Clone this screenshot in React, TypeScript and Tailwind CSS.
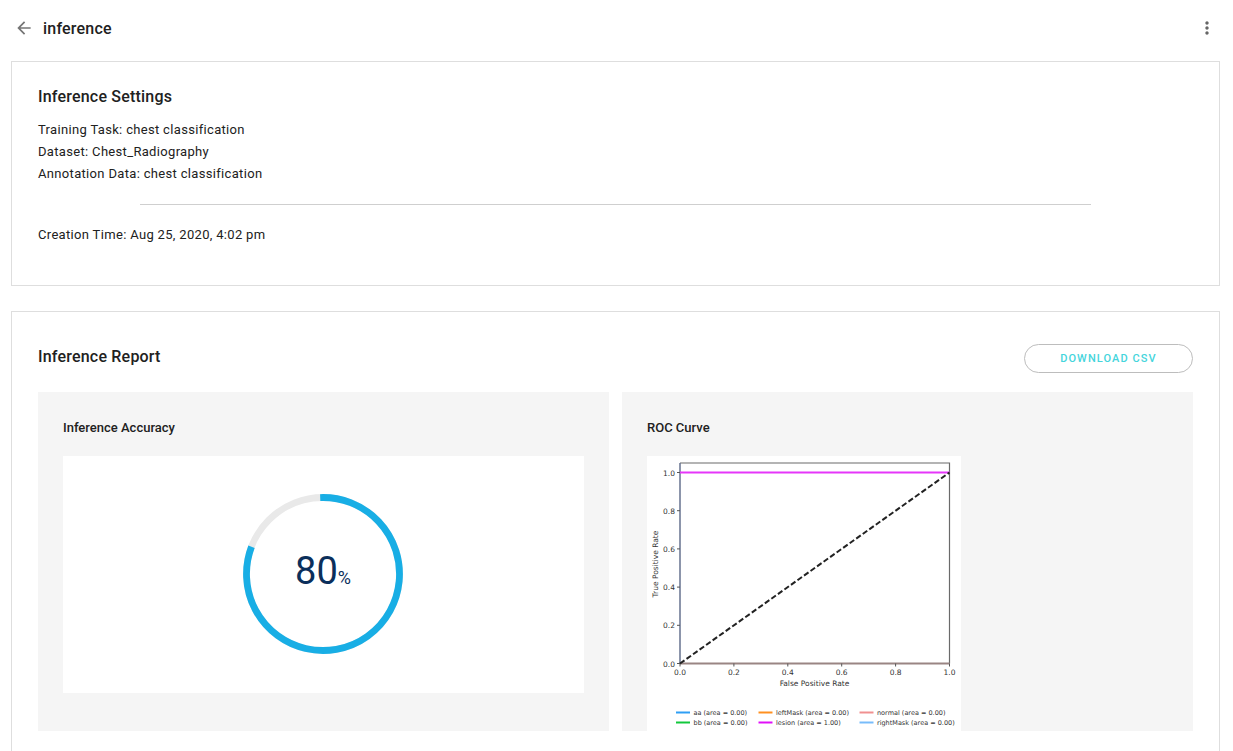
import { MdArrowBack, MdMoreVert } from "react-icons/md";

const settings = [
  ["Training Task", "chest classification"],
  ["Dataset", "Chest_Radiography"],
  ["Annotation Data", "chest classification"],
];

const ticks = [0, 0.2, 0.4, 0.6, 0.8, 1];

const legend = [
  { label: "aa (area = 0.00)", color: "#2f9ff5", x: 58, y: 513 },
  { label: "bb (area = 0.00)", color: "#12c83c", x: 58, y: 533 },
  { label: "leftMask (area = 0.00)", color: "#ff9020", x: 223, y: 513 },
  { label: "lesion (area = 1.00)", color: "#e010f8", x: 223, y: 533 },
  { label: "normal (area = 0.00)", color: "#f09090", x: 425, y: 513 },
  { label: "rightMask (area = 0.00)", color: "#78bcfa", x: 425, y: 533 },
];

const px = (v: number) => 66 + v * 539;
const py = (v: number) => 415 - v * 382;

function AccuracyRing() {
  return (
    <div className="grid size-40 place-items-center">
      <svg viewBox="-80 -80 160 160" className="col-start-1 row-start-1 size-40" fill="none" strokeWidth="6.8" aria-hidden="true">
        <circle r="76.5" stroke="#e9e9e9" />
        <path d="M-2.8 -76.45A76.5 76.5 0 1 1 -71.5 -27.2" stroke="#18aee5" />
      </svg>
      <p className="col-start-1 row-start-1 pt-0.5 leading-12 text-[#0b2f5b]">
        <span className="text-[38px]">80</span>
        <span className="text-lg">%</span>
      </p>
    </div>
  );
}

function RocChart() {
  return (
    <svg viewBox="0 0 628 550" className="block w-[314px] bg-white font-['DejaVu_Sans',sans-serif]" fill="#333" role="img" aria-label="ROC Curve">
      <path d="M66 14H605V415" fill="none" stroke="#6a6a6a" strokeWidth="2.4" />
      <path d="M66 14V415" stroke="#66728f" strokeWidth="3" />
      <path d="M66 415H605" stroke="#9a8583" strokeWidth="4" />
      {ticks.map((t) => (
        <g key={t} fontSize="15">
          <path d={`M${px(t)} 415v6M66 ${py(t)}h-6`} stroke="#555" strokeWidth="2" />
          <text x={px(t)} y="438" textAnchor="middle">{t.toFixed(1)}</text>
          <text x="56" y={py(t) + 6} textAnchor="end">{t.toFixed(1)}</text>
        </g>
      ))}
      <path d="M66 33H605" stroke="#e636fa" strokeWidth="4" />
      <path d="M66 415L605 33" stroke="#222" strokeWidth="4" strokeDasharray="11 5" />
      <text x="335" y="459" fontSize="15" textAnchor="middle">False Positive Rate</text>
      <text transform="translate(21 216) rotate(-90)" fontSize="15" textAnchor="middle">True Positive Rate</text>
      {legend.map((l) => (
        <g key={l.label} fontSize="13">
          <path d={`M${l.x} ${l.y}h28`} stroke={l.color} strokeWidth="4" />
          <text x={l.x + 35} y={l.y + 4}>{l.label}</text>
        </g>
      ))}
    </svg>
  );
}

export default function App() {
  return (
    <div className="bg-white pr-[13px] pb-6 pl-[11px] font-[Roboto,sans-serif] text-[#212121]">
      <header className="flex h-[61px] items-center justify-between px-[3px] pb-[5px]">
        <div className="flex items-center gap-[9px]">
          <button type="button" aria-label="Back" className="text-[#757575]">
            <MdArrowBack size={20} />
          </button>
          <h1 className="pt-0.5 text-base font-medium tracking-[0.0125em]">inference</h1>
        </div>
        <button type="button" aria-label="More options" className="text-[#666]">
          <MdMoreVert size={20} />
        </button>
      </header>
      <main className="flex flex-col gap-[25px]">
        <section className="border border-[#dedede] px-[26px] pt-[23px] pb-[39px]">
          <h2 className="text-base leading-6 font-medium tracking-[0.0125em]">Inference Settings</h2>
          <div className="mt-[10px] text-[13px] leading-[22px] tracking-wide">
            {settings.map(([name, value]) => (
              <p key={name}>{name}: {value}</p>
            ))}
          </div>
          <hr className="mx-[102px] my-[19px] border-[#cfcfcf]" />
          <p className="text-[13px] leading-[22px] tracking-wide">Creation Time: Aug 25, 2020, 4:02 pm</p>
        </section>
        <section className="border border-[#dedede] px-[26px] pt-8 pb-[26px]">
          <div className="flex items-start justify-between">
            <h2 className="text-base leading-[26px] font-medium tracking-[0.0125em]">Inference Report</h2>
            <button type="button" className="h-[29px] w-[169px] rounded-full border border-[#bdbdbd] pt-0.5 text-[11px] font-medium tracking-widest text-[#45d5dc]">
              DOWNLOAD CSV
            </button>
          </div>
          <div className="mt-[19px] grid grid-cols-2 gap-[13px]">
            <article className="bg-[#f5f5f5] px-[25px] pt-[26px]">
              <h3 className="text-[13px] leading-5 font-medium">Inference Accuracy</h3>
              <div className="mt-[18px] flex h-[237px] items-start justify-center bg-white pt-[38px] pr-px">
                <AccuracyRing />
              </div>
            </article>
            <article className="bg-[#f5f5f5] px-[25px] pt-[26px]">
              <h3 className="text-[13px] leading-5 font-medium">ROC Curve</h3>
              <div className="mt-[18px]">
                <RocChart />
              </div>
            </article>
          </div>
        </section>
      </main>
    </div>
  );
}
